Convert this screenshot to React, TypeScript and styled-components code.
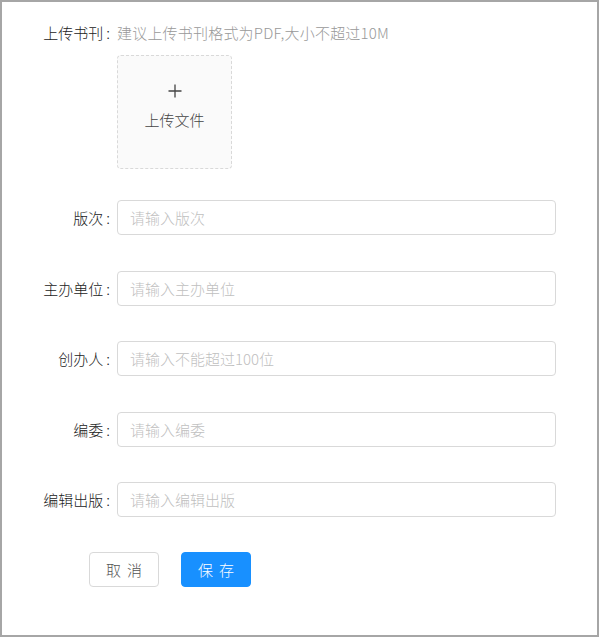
import React from "react";
import styled, { createGlobalStyle } from "styled-components";

const Global = createGlobalStyle`
  html, body { margin: 0; padding: 0; background: #fff; }
  body { font-family: "Noto Sans CJK SC", "Noto Sans", sans-serif; font-weight: 300; }
  * { box-sizing: border-box; }
`;

const Frame = styled.div`
  width: 599px;
  height: 637px;
  border: 2px solid #a6a6a6;
  background: #fff;
  padding: 20px 41px 0 0;
  font-size: 15px;
  color: #333;
`;

const Form = styled.div`
  display: flex;
  flex-direction: column;
`;

const Row = styled.div<{ $gap?: number }>`
  display: grid;
  grid-template-columns: 108px 1fr;
  column-gap: 7px;
  align-items: start;
  margin-top: ${(p) => p.$gap ?? 0}px;
`;

const Label = styled.label<{ $h: number }>`
  text-align: right;
  line-height: ${(p) => p.$h}px;
  height: ${(p) => p.$h}px;
  color: #222;
  white-space: nowrap;
  &::after {
    content: ":";
    margin-left: 3px;
  }
`;

const Field = styled.div`
  display: flex;
  flex-direction: column;
`;

const Hint = styled.div`
  line-height: 22px;
  color: #999;
  white-space: nowrap;
  letter-spacing: 0.2px;
`;

const UploadBox = styled.div`
  margin-top: 11px;
  width: 115px;
  height: 114px;
  border: 1px dashed #d9d9d9;
  border-radius: 4px;
  background: #fafafa;
  display: flex;
  flex-direction: column;
  align-items: center;
  padding-top: 28px;
  color: #555;
`;

const PlusIcon = styled.svg`
  display: block;
  width: 14px;
  height: 14px;
`;

const UploadText = styled.div`
  line-height: 22px;
  color: #444;
  margin-top: 11px;
`;

const Input = styled.input`
  height: 35px;
  width: 439px;
  border: 1px solid #d9d9d9;
  border-radius: 4px;
  padding: 0 12px;
  font-size: 15px;
  font-family: inherit;
  font-weight: 300;
  color: #333;
  outline: none;
  &::placeholder { color: #bfbfbf; }
`;

const Actions = styled.div`
  display: flex;
  gap: 22px;
  margin-top: 35px;
  padding-left: 87px;
`;

const Button = styled.button<{ $primary?: boolean }>`
  width: 70px;
  height: 35px;
  border-radius: 4px;
  font-size: 15px;
  font-family: inherit;
  font-weight: 300;
  letter-spacing: 0.4em;
  text-indent: 0.4em;
  cursor: pointer;
  border: 1px solid ${(p) => (p.$primary ? "#1890ff" : "#d9d9d9")};
  background: ${(p) => (p.$primary ? "#1890ff" : "#fff")};
  color: ${(p) => (p.$primary ? "#fff" : "#555")};
`;

const fields = [
  { label: "版次", ph: "请输入版次" },
  { label: "主办单位", ph: "请输入主办单位" },
  { label: "创办人", ph: "请输入不能超过100位" },
  { label: "编委", ph: "请输入编委" },
  { label: "编辑出版", ph: "请输入编辑出版" },
];

export default function App() {
  return (
    <>
      <Global />
      <Frame>
        <Form>
          <Row>
            <Label $h={22}>上传书刊</Label>
            <Field>
              <Hint>建议上传书刊格式为PDF,大小不超过10M</Hint>
              <UploadBox>
                <PlusIcon viewBox="0 0 14 14">
                  <path d="M7 0.5V13.5M0.5 7H13.5" stroke="#444" strokeWidth="1.3" fill="none" />
                </PlusIcon>
                <UploadText>上传文件</UploadText>
              </UploadBox>
            </Field>
          </Row>
          {fields.map((f, i) => (
            <Row key={f.label} $gap={i === 0 ? 31 : 35.5}>
              <Label $h={35}>{f.label}</Label>
              <Input placeholder={f.ph} />
            </Row>
          ))}
          <Actions>
            <Button>取消</Button>
            <Button $primary>保存</Button>
          </Actions>
        </Form>
      </Frame>
    </>
  );
}
